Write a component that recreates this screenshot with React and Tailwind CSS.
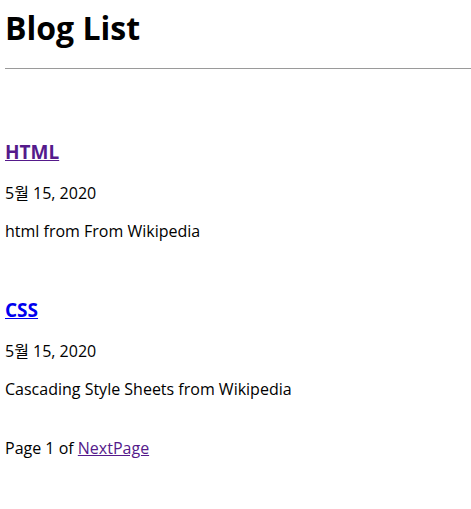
import React from 'react';

const posts = [
    { title: 'HTML', date: '5월 15, 2020', description: 'html from From Wikipedia', visited: true },
    { title: 'CSS', date: '5월 15, 2020', description: 'Cascading Style Sheets from Wikipedia', visited: false }
];

export default function App() {
    return (
        <div className="min-h-screen bg-white text-black pl-[5px] font-['Open_Sans','Noto_Sans_CJK_KR',sans-serif]">
            <h1 className="text-[32px] font-bold leading-[40px] pt-[8px] pb-[20px]">Blog List</h1>
            <hr className="border-t-[1.5px] border-[#9a9a9a]" />

            <div className="pt-[69px]">
                {posts.map((post) => (
                    <div key={post.title} className="mb-[53px]">
                        <h2 className="text-[19px] font-bold leading-[28px]">
                            <a href="#" className={`underline ${post.visited ? 'text-[#551a8b]' : 'text-[#0000ee]'}`}>
                                {post.title}
                            </a>
                        </h2>
                        <p className="text-[16px] leading-[24px] mt-[15px]">{post.date}</p>
                        <p className="text-[16px] leading-[24px] mt-[14px]">{post.description}</p>
                    </div>
                ))}
            </div>

            <p className="text-[16px] leading-[24px] -mt-[18px]">
                Page 1 of <a href="#" className="underline text-[#551a8b]">NextPage</a>
            </p>
        </div>
    );
}
